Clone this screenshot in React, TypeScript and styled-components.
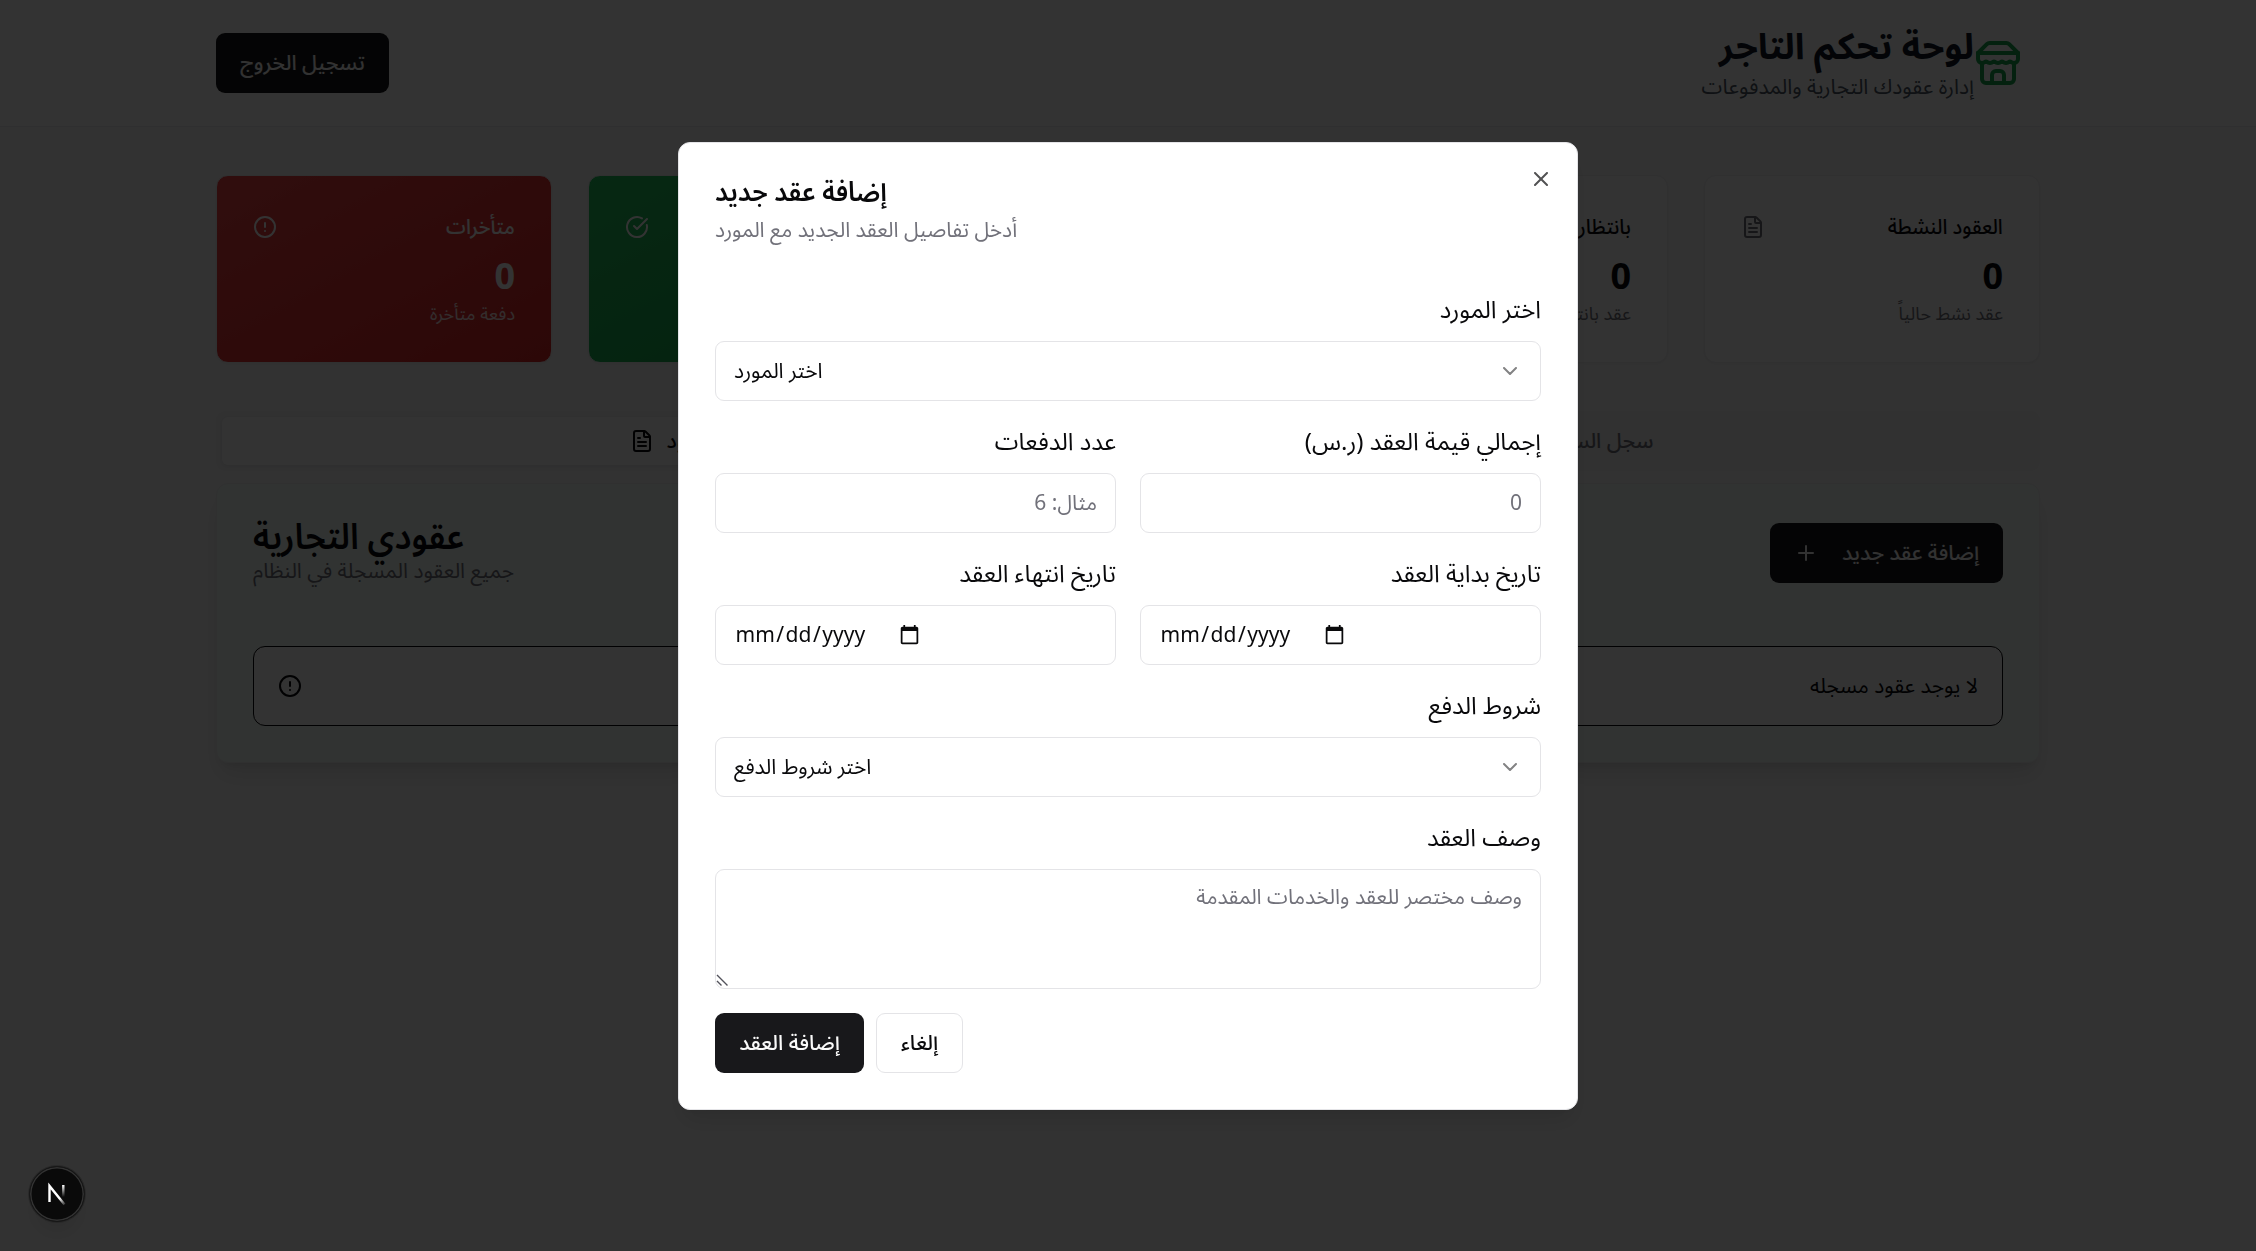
import React from "react";
import styled, { createGlobalStyle, css } from "styled-components";
import { FileText, CircleAlert, CircleCheckBig, Clock, Plus, X, ChevronDown, History } from "lucide-react";

const GlobalStyle = createGlobalStyle`
  *, *::before, *::after { box-sizing: border-box; }
  html, body { margin: 0; height: 100%; overflow: hidden; }
  body {
    background: #fafafa;
    color: #09090b;
    font-family: "Noto Sans", "Noto Sans Arabic", "DejaVu Sans", sans-serif;
    font-size: 21px;
    line-height: 30px;
  }
  h1, h2, p { margin: 0; }
  button, input, textarea { font: inherit; margin: 0; }
`;

const Page = styled.div`
  direction: rtl;
  height: 1251px;
  overflow: hidden;
`;

const Header = styled.header`
  height: 127px;
  background: #fff;
  border-bottom: 1px solid #ebebee;
`;

const HeaderInner = styled.div`
  width: 1824px;
  height: 126px;
  margin: 0 auto;
  display: flex;
  align-items: center;
  justify-content: space-between;
`;

const Brand = styled.div`
  display: flex;
  align-items: center;
  padding-inline-start: 18px;
  svg { color: #16a34a; }
`;

const BrandNames = styled.div`
  margin-top: -4px;
`;

const BrandTitle = styled.h1`
  margin-bottom: 1px;
  font-size: 36px;
  line-height: 48px;
  font-weight: 700;
  color: #111827;
`;

const BrandText = styled.p`
  color: #4b5563;
`;

const Caption = styled.span`
  display: block;
  margin-bottom: 2px;
`;

const Button = styled.button<{ $outline?: boolean; $w: number }>`
  display: flex;
  align-items: center;
  justify-content: center;
  gap: 24px;
  width: ${(p) => p.$w}px;
  height: 60px;
  padding: 0;
  border-radius: 9px;
  border: ${(p) => (p.$outline ? "1px solid #e4e4e7" : "0")};
  background: ${(p) => (p.$outline ? "#fff" : "#18181b")};
  color: ${(p) => (p.$outline ? "#09090b" : "#fafafa")};
  font-size: 21px;
  font-weight: 500;
  white-space: nowrap;
`;

const Main = styled.main`
  width: 1824px;
  margin: 0 auto;
  padding-top: 48px;
`;

const Stats = styled.div`
  display: grid;
  grid-template-columns: repeat(5, 1fr);
  gap: 36px;
`;

const tones = {
  plain: css`
    background: #fff;
    color: #09090b;
    --soft: #71717a;
    --icon: #71717a;
  `,
  green: css`
    background: linear-gradient(to bottom right, #22c55e, #16a34a);
    color: #fff;
    --soft: #dcfce7;
    --icon: #fff;
  `,
  red: css`
    background: linear-gradient(to bottom right, #ef4444, #dc2626);
    color: #fff;
    --soft: #fee2e2;
    --icon: #fff;
  `,
};

const StatCard = styled.section<{ $tone: keyof typeof tones }>`
  height: 188px;
  padding: 36px;
  border: 1px solid #ededf0;
  border-radius: 12px;
  box-shadow: 0 1px 3px rgba(0, 0, 0, 0.05);
  ${(p) => tones[p.$tone]}
`;

const StatHead = styled.div`
  display: flex;
  align-items: center;
  justify-content: space-between;
  height: 30px;
  margin-bottom: 10px;
  font-weight: 500;
  svg { color: var(--icon); }
`;

const StatTitle = styled(Caption)`
  transform: scaleX(0.945);
  transform-origin: right;
`;

const StatValue = styled.div`
  font-size: 36px;
  line-height: 48px;
  margin-bottom: 1px;
  font-weight: 700;
`;

const StatNote = styled.p`
  font-size: 18px;
  line-height: 24px;
  color: var(--soft);
`;

const TabList = styled.div`
  display: grid;
  grid-template-columns: 1fr 1fr;
  height: 60px;
  margin-top: 48px;
  padding: 6px;
  border-radius: 9px;
  background: #f4f4f5;
`;

const Tab = styled.div<{ $active?: boolean }>`
  display: flex;
  align-items: center;
  justify-content: center;
  gap: 12px;
  border-radius: 6px;
  font-weight: 500;
  color: ${(p) => (p.$active ? "#09090b" : "#71717a")};
  background: ${(p) => (p.$active ? "#fff" : "transparent")};
  box-shadow: ${(p) => (p.$active ? "0 1px 4px rgba(0,0,0,.08)" : "none")};
`;

const Panel = styled.section`
  margin-top: 12px;
  height: 280px;
  padding: 36px;
  border: 1px solid #eeeff0;
  border-radius: 12px;
  background: #f4fdf9;
  box-shadow: 0 15px 23px -4px rgba(0, 0, 0, 0.1), 0 6px 9px -6px rgba(0, 0, 0, 0.1);
`;

const PanelHead = styled.div`
  display: flex;
  align-items: center;
  justify-content: space-between;
  height: 66px;
  margin-bottom: 60px;
`;

const PanelTitles = styled.div`
  margin-bottom: 2px;
  text-align: left;
`;

const PanelTitle = styled.h2`
  font-size: 36px;
  line-height: 34px;
  margin-bottom: 2px;
  font-weight: 600;
  transform: scaleX(0.94);
  transform-origin: left;
`;

const Muted = styled.p`
  color: #71717a;
`;

const Alert = styled.div`
  display: flex;
  align-items: center;
  justify-content: space-between;
  height: 80px;
  padding: 0 24px;
  border: 1px solid #09090b;
  border-radius: 12px;
  background: #fff;
`;

const Overlay = styled.div`
  position: fixed;
  inset: 0;
  display: flex;
  align-items: center;
  justify-content: center;
  direction: rtl;
  background: rgba(0, 0, 0, 0.8);
`;

const Dialog = styled.div`
  position: relative;
  display: flex;
  flex-direction: column;
  gap: 24px;
  width: 900px;
  height: 968px;
  margin-top: 1px;
  padding: 36px;
  border: 1px solid #e4e4e7;
  border-radius: 12px;
  background: #fff;
  box-shadow: 0 15px 23px -4px rgba(0, 0, 0, 0.1), 0 6px 9px -6px rgba(0, 0, 0, 0.1);
`;

const CloseButton = styled.button`
  position: absolute;
  top: 24px;
  right: 24px;
  display: flex;
  padding: 0;
  border: 0;
  background: none;
  color: #09090b;
  opacity: 0.7;
`;

const DialogHead = styled.div`
  display: flex;
  flex-direction: column;
  gap: 12px;
  margin-bottom: 25px;
  text-align: left;
`;

const DialogTitle = styled.h2`
  font-size: 27px;
  line-height: 23px;
  font-weight: 600;
  transform: scaleX(0.947);
  transform-origin: left;
`;

const FieldRow = styled.div`
  display: grid;
  grid-template-columns: 1fr 1fr;
  gap: 24px;
`;

const Field = styled.div`
  display: flex;
  flex-direction: column;
`;

const Label = styled.label`
  margin: -2px 0 14px;
  font-size: 24px;
  line-height: 36px;
`;

const box = css`
  border: 1px solid #e4e4e7;
  border-radius: 9px;
  background: #fff;
  outline: none;
  color: #09090b;
`;

const SelectBox = styled.div`
  ${box}
  display: flex;
  align-items: center;
  justify-content: space-between;
  height: 60px;
  padding: 0 18px;
  svg { opacity: 0.5; }
`;

const TextInput = styled.input`
  ${box}
  width: 100%;
  height: 60px;
  padding: 0 18px 2px;
  &::placeholder { color: #71717a; opacity: 1; }
`;

const DateBox = styled.div`
  ${box}
  display: flex;
  align-items: center;
  gap: 32px;
  height: 60px;
  padding: 0 18px 2px;
  direction: ltr;
`;

const DateText = styled.span`
  display: flex;
  span { padding: 0 1.5px; }
`;

const AreaWrap = styled.div`
  position: relative;
  display: flex;
`;

const Area = styled.textarea`
  ${box}
  width: 100%;
  height: 120px;
  padding: 11px 18px;
  resize: none;
  &::placeholder { color: #71717a; opacity: 1; }
`;

const Grip = styled.svg`
  position: absolute;
  left: 1px;
  bottom: 2px;
`;

const Actions = styled.div`
  display: flex;
  justify-content: flex-end;
  gap: 12px;
`;

const DevBadge = styled.div`
  position: fixed;
  left: 29px;
  top: 1166px;
  width: 56px;
  height: 56px;
  display: flex;
  align-items: center;
  justify-content: center;
  border-radius: 50%;
  background: #0a0a0a;
  border: 1px solid #171717;
  box-shadow: inset 0 0 0 1.5px #333, 0 0 0 1px rgba(0, 0, 0, 0.2), 0 16px 24px -8px rgba(0, 0, 0, 0.12);
`;

type Stat = {
  title: string;
  note: string;
  tone: keyof typeof tones;
  icon: React.ComponentType<any>;
};

const stats: Stat[] = [
  { title: "العقود النشطة", note: "عقد نشط حالياً", tone: "plain", icon: FileText },
  { title: "بانتظار الموافقة", note: "عقد بانتظار الموافقة", tone: "plain", icon: Clock },
  { title: "الدفعات القادمة", note: "دفعة قادمة", tone: "plain", icon: Clock },
  { title: "مدفوعات", note: "دفعة مكتملة", tone: "green", icon: CircleCheckBig },
  { title: "متأخرات", note: "دفعة متأخرة", tone: "red", icon: CircleAlert },
];

const StoreIcon = () => (
  <svg
    width="48"
    height="48"
    viewBox="0 0 24 24"
    fill="none"
    stroke="currentColor"
    strokeWidth="2"
    strokeLinecap="round"
    strokeLinejoin="round"
  >
    <path d="m2 7 4.41-4.41A2 2 0 0 1 7.83 2h8.34a2 2 0 0 1 1.42.59L22 7" />
    <path d="M4 12v8a2 2 0 0 0 2 2h12a2 2 0 0 0 2-2v-8" />
    <path d="M15 22v-4a2 2 0 0 0-2-2h-2a2 2 0 0 0-2 2v4" />
    <path d="M2 7h20" />
    <path d="M22 7v3a2 2 0 0 1-2 2a2.7 2.7 0 0 1-1.59-.63.7.7 0 0 0-.82 0A2.7 2.7 0 0 1 16 12a2.7 2.7 0 0 1-1.59-.63.7.7 0 0 0-.82 0A2.7 2.7 0 0 1 12 12a2.7 2.7 0 0 1-1.59-.63.7.7 0 0 0-.82 0A2.7 2.7 0 0 1 8 12a2.7 2.7 0 0 1-1.59-.63.7.7 0 0 0-.82 0A2.7 2.7 0 0 1 4 12a2 2 0 0 1-2-2V7" />
  </svg>
);

const DateField = ({ label }: { label: string }) => (
  <Field>
    <Label>{label}</Label>
    <DateBox>
      <DateText>
        <span>mm</span>/<span>dd</span>/<span>yyyy</span>
      </DateText>
      <svg width="21" height="21" viewBox="0 0 24 24" fill="#09090b">
        <path d="M20 3h-1V1h-2v2H7V1H5v2H4c-1.1 0-2 .9-2 2v16c0 1.1.9 2 2 2h16c1.1 0 2-.9 2-2V5c0-1.1-.9-2-2-2zm0 18H4V8h16v13z" />
      </svg>
    </DateBox>
  </Field>
);

const SelectField = ({ label, value }: { label: string; value: string }) => (
  <Field>
    <Label>{label}</Label>
    <SelectBox>
      <ChevronDown size={24} />
      <Caption>{value}</Caption>
    </SelectBox>
  </Field>
);

export default function App() {
  return (
    <>
      <GlobalStyle />
      <Page>
        <Header>
          <HeaderInner>
            <Brand>
              <StoreIcon />
              <BrandNames>
                <BrandTitle>لوحة تحكم التاجر</BrandTitle>
                <BrandText>إدارة عقودك التجارية والمدفوعات</BrandText>
              </BrandNames>
            </Brand>
            <Button $w={173}>
              <Caption>تسجيل الخروج</Caption>
            </Button>
          </HeaderInner>
        </Header>
        <Main>
          <Stats>
            {stats.map(({ title, note, tone, icon: Icon }) => (
              <StatCard key={title} $tone={tone}>
                <StatHead>
                  <StatTitle>{title}</StatTitle>
                  <Icon size={24} />
                </StatHead>
                <StatValue>0</StatValue>
                <StatNote>{note}</StatNote>
              </StatCard>
            ))}
          </Stats>
          <TabList>
            <Tab>
              <Caption>سجل السداد</Caption>
              <History size={24} />
            </Tab>
            <Tab $active>
              <Caption>العقود</Caption>
              <FileText size={24} />
            </Tab>
          </TabList>
          <Panel>
            <PanelHead>
              <Button $w={233}>
                <Caption>إضافة عقد جديد</Caption>
                <Plus size={24} />
              </Button>
              <PanelTitles>
                <PanelTitle>عقودي التجارية</PanelTitle>
                <Muted>جميع العقود المسجلة في النظام</Muted>
              </PanelTitles>
            </PanelHead>
            <Alert>
              <Caption>لا يوجد عقود مسجله</Caption>
              <CircleAlert size={24} />
            </Alert>
          </Panel>
        </Main>
      </Page>
      <Overlay>
        <Dialog role="dialog">
          <CloseButton aria-label="إغلاق">
            <X size={24} />
          </CloseButton>
          <DialogHead>
            <DialogTitle>إضافة عقد جديد</DialogTitle>
            <Muted>أدخل تفاصيل العقد الجديد مع المورد</Muted>
          </DialogHead>
          <SelectField label="اختر المورد" value="اختر المورد" />
          <FieldRow>
            <Field>
              <Label>إجمالي قيمة العقد (ر.س)</Label>
              <TextInput placeholder="0" />
            </Field>
            <Field>
              <Label>عدد الدفعات</Label>
              <TextInput placeholder="مثال: 6" />
            </Field>
          </FieldRow>
          <FieldRow>
            <DateField label="تاريخ بداية العقد" />
            <DateField label="تاريخ انتهاء العقد" />
          </FieldRow>
          <SelectField label="شروط الدفع" value="اختر شروط الدفع" />
          <Field>
            <Label>وصف العقد</Label>
            <AreaWrap>
              <Area placeholder="وصف مختصر للعقد والخدمات المقدمة" />
              <Grip width="14" height="14" viewBox="0 0 14 14" fill="none" stroke="#52525b" strokeWidth="1.4">
                <path d="M1 2 L11.5 12.5 M1 8 L5.5 12.5" />
              </Grip>
            </AreaWrap>
          </Field>
          <Actions>
            <Button $w={87} $outline>
              <Caption>إلغاء</Caption>
            </Button>
            <Button $w={149}>
              <Caption>إضافة العقد</Caption>
            </Button>
          </Actions>
        </Dialog>
      </Overlay>
      <DevBadge>
        <svg width="20" height="24" viewBox="0 0 20 24" fill="none">
          <defs>
            <linearGradient id="diag" x1="9" y1="12" x2="18" y2="23" gradientUnits="userSpaceOnUse">
              <stop offset="0.4" stopColor="#fff" />
              <stop offset="1" stopColor="#fff" stopOpacity="0.1" />
            </linearGradient>
            <linearGradient id="stem" x1="0" y1="3" x2="0" y2="15" gradientUnits="userSpaceOnUse">
              <stop offset="0" stopColor="#fff" />
              <stop offset="1" stopColor="#fff" stopOpacity="0" />
            </linearGradient>
          </defs>
          <path d="M2.5 20V4L17.5 22.5" stroke="url(#diag)" strokeWidth="2.4" />
          <path d="M16.3 3v12" stroke="url(#stem)" strokeWidth="2.4" />
        </svg>
      </DevBadge>
    </>
  );
}
